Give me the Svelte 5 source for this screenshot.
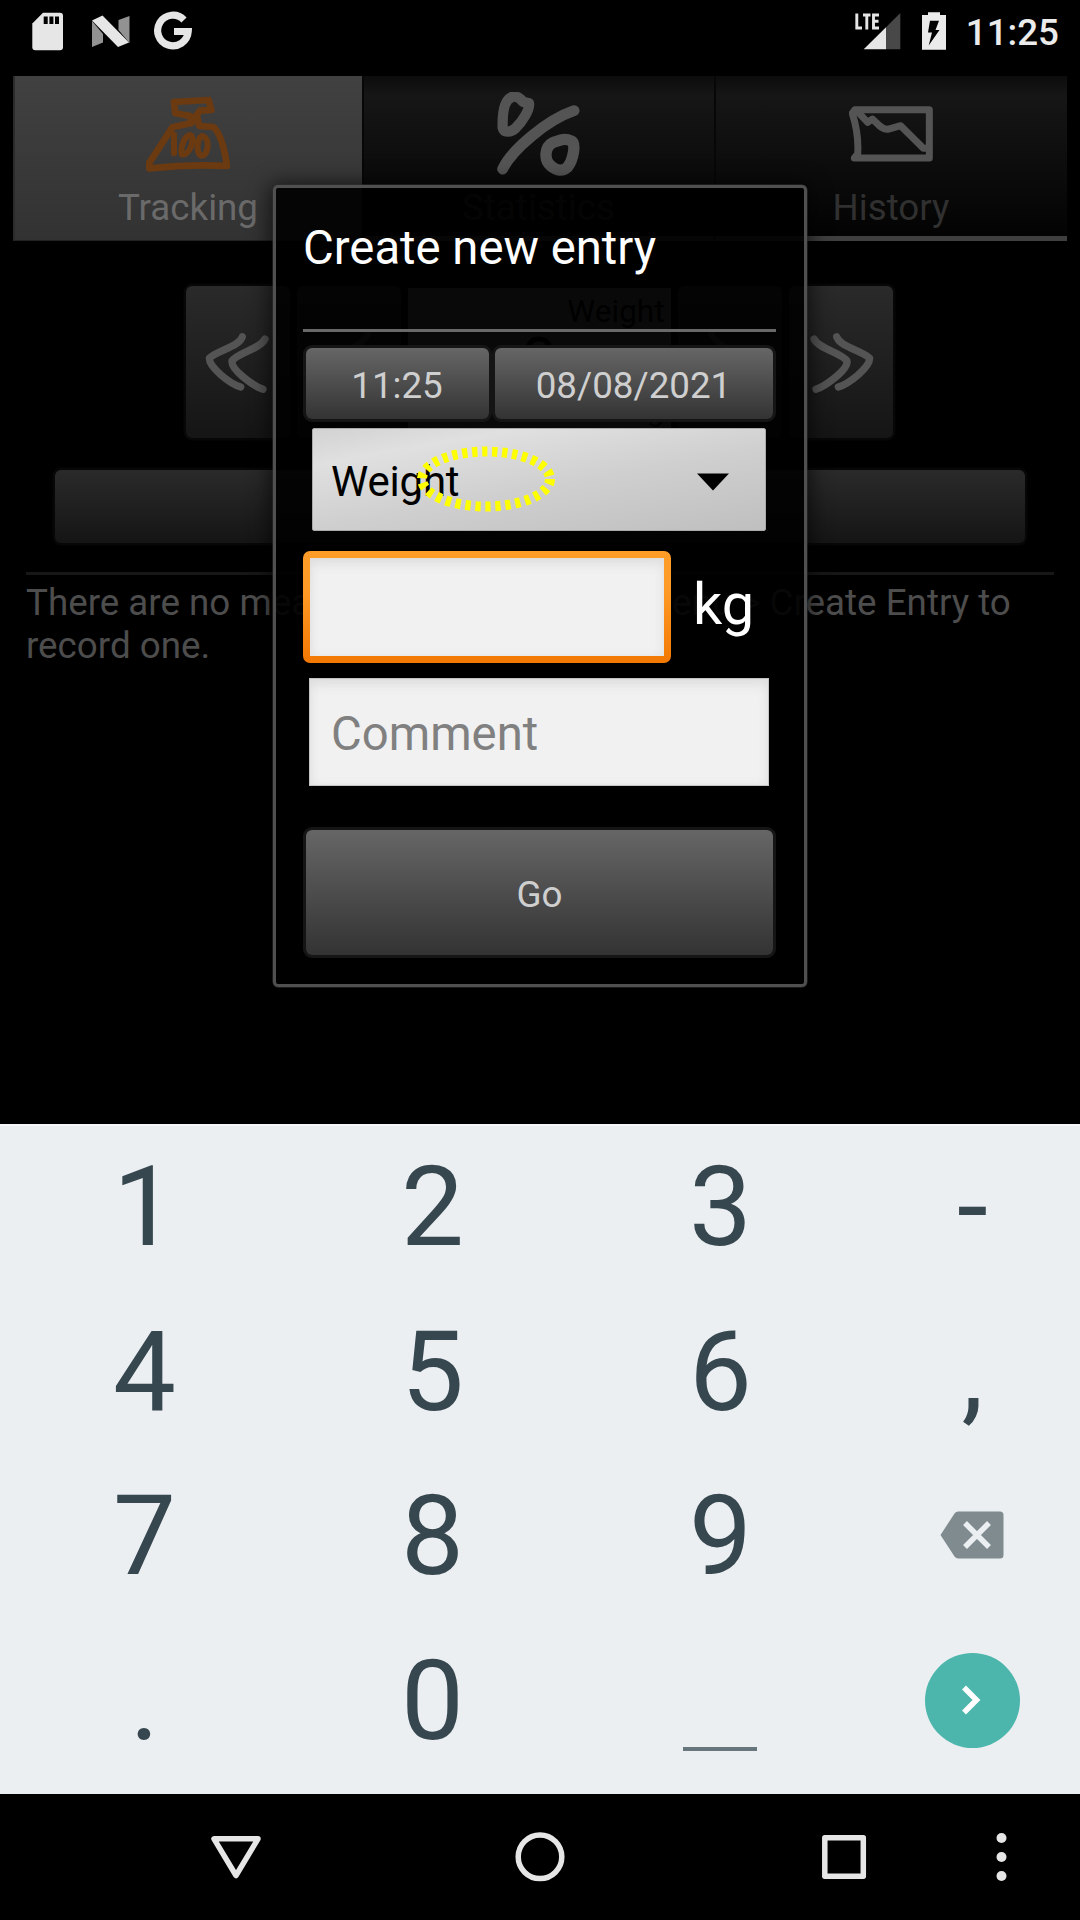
<script>
  const keys = ['1', '2', '3', '-', '4', '5', '6', ',', '7', '8', '9', 'del', '.', '0', 'space', 'next'];
</script>

<div class="screen">
  <header class="status">
    <svg class="ic-left" width="170" height="40" viewBox="30 11 170 40">
      <path fill="#e6e6e6" d="M43 12.7H60a3 3 0 0 1 3 3V47.300a3 3 0 0 1-3 3H35.300a3 3 0 0 1-3-3V23.500Z" />
      <path fill="#000" d="M43.700 16.500h4v7.500h-4zM49.400 16.500h4v7.500h-4zM55 16.500h4v7.500h-4z" />
      <path fill="#929292" d="M92 21l11 13v8.500L92 47zM118.500 20l11-4v27l-11-13z" />
      <path fill="#e6e6e6" d="M92 20.500l10.500-5L129 42.500l-11 4.500z" />
      <path fill="none" stroke="#e6e6e6" stroke-width="7.200" d="M184 19.900A15.300 15.300 0 1 0 188.200 31.500H174" />
    </svg>
    <div class="status-right">
      <svg width="96" height="40" viewBox="852 11 96 40">
        <path fill="none" stroke="#e6e6e6" stroke-width="2.900" d="M856.800 13.500V28H862M863 15h7.500M866.800 15v14.400M879 15h-5.500v13h5.500M873.500 21.300h5" />
        <path fill="#484848" d="M886 27.300L900.300 13V49.200H886z" />
        <path fill="#e6e6e6" d="M863.700 49.200L886 27.300V49.200z" />
        <path fill="#ebebeb" d="M928 12.300h12v2.800h6v34.700h-24V15.100h6z" />
        <path fill="#000" d="M930 20.700h9l-3.500 9.300h4L928.700 45.500l3.300-13h-4z" />
      </svg>
      <span class="clock">11:25</span>
    </div>
  </header>

  <main>
    <nav class="tabs">
      <div class="tab active">
        <svg width="84" height="84" viewBox="438 276 252 252" fill="none" stroke="#6c3a10" stroke-width="20" stroke-linecap="round" stroke-linejoin="round">
          <path d="M522 306L626 300L634 330L600 332L590 345L598 378L640 381C664 402 674 450 681 498C610 494 530 496 448 505L447 490L517 382L575 369L571 348L526 340Z" />
          <path stroke-width="18" d="M522 404V460M570 405C552 410 541 440 545 463C570 470 588 408 570 405ZM606 408C590 415 588 456 602 467C624 473 634 414 606 408Z" />
        </svg>
        <span>Tracking</span>
      </div>
      <div class="tab">
        <svg width="84" height="84" viewBox="411 96 252 252" fill="none" stroke="#545454" stroke-linecap="round" stroke-linejoin="round">
          <path stroke-width="31" d="M456 111C430 120 427 165 428 203C432 221 454 216 466 205C488 185 510 148 507 130L488 125Q475 106 456 111Z" />
          <path stroke-width="33" d="M428 327C455 270 560 180 642 152" />
          <path stroke-width="34" d="M606 239L580 247C553 260 551 300 573 318C590 333 609 334 622 322C640 300 649 250 634 243Q620 236 606 239Z" />
        </svg>
        <span>Statistics</span>
      </div>
      <div class="tab">
        <svg width="84" height="84" viewBox="387 276 252 252" fill="none" stroke="#545454" stroke-width="21" stroke-linecap="round" stroke-linejoin="round">
          <path d="M397 340L405 329H628V474H403L413 462C416 420 408 375 397 340" />
          <path d="M412 334L443 367L457 357C475 372 484 389 503 388L542 377L610 445H626" />
        </svg>
        <span>History</span>
      </div>
    </nav>

    <section class="picker">
      <div class="dark-btn step">
        <svg width="80" height="80" viewBox="594 216 240 240" fill="none" stroke="#545454" stroke-width="22" stroke-linecap="round" stroke-linejoin="round">
          <path d="M727 260C718 291 650 301 628 325C628 353 690 401 722 411M795 267C780 297 710 310 696 333C692 359 760 408 789 418" />
        </svg>
      </div>
      <div class="dark-btn step">
        <svg width="50" height="80" viewBox="0 0 50 80" fill="none" stroke="#454545" stroke-width="6" stroke-linecap="round"><path d="M44 12Q38 23 10 36Q20 55 44 66" /></svg>
      </div>
      <div class="value">
        <span>Weight</span>
        <b>0</b>
        <span>kg</span>
      </div>
      <div class="dark-btn step flip">
        <svg width="50" height="80" viewBox="0 0 50 80" fill="none" stroke="#454545" stroke-width="6" stroke-linecap="round"><path d="M44 12Q38 23 10 36Q20 55 44 66" /></svg>
      </div>
      <div class="dark-btn step flip">
        <svg width="80" height="80" viewBox="594 216 240 240" fill="none" stroke="#545454" stroke-width="22" stroke-linecap="round" stroke-linejoin="round">
          <path d="M727 260C718 291 650 301 628 325C628 353 690 401 722 411M795 267C780 297 710 310 696 333C692 359 760 408 789 418" />
        </svg>
      </div>
    </section>
    <div class="dark-btn wide"></div>
    <hr />
    <p class="message"><span class="lead">There are no measurements. Use</span><span>Menu &gt; Create Entry to</span><br />record one.</p>
  </main>

  <section class="keyboard">
    {#each keys as key}
      <div class="key">
        {#if key === 'del'}
          <svg class="del" width="64" height="48" viewBox="0 0 64 48">
            <path fill="#7f8b8f" d="M18 0.500H60a3.500 3.500 0 0 1 3.500 3.500V44a3.500 3.500 0 0 1-3.500 3.500H18q-2 0-3.300-1.700L0.500 24 14.700 2.200Q16 .5 18 .5Z" />
            <path stroke="#ebeff2" stroke-width="5.500" d="M25 12L49 36M49 12L25 36" />
          </svg>
        {:else if key === 'space'}
          <i class="space"></i>
        {:else if key === 'next'}
          <div class="next">
            <svg width="24" height="36" viewBox="0 0 24 36" fill="none" stroke="#fff" stroke-width="5.500"><path d="M4 5.500L16.500 18 4 30.500" /></svg>
          </div>
        {:else}
          <span>{key}</span>
        {/if}
      </div>
    {/each}
  </section>

  <footer>
    <svg width="1080" height="126" viewBox="0 1794 1080 126" fill="none" stroke="#e6e6e6" stroke-width="5.500" stroke-linejoin="round">
      <path d="M214 1838.800H258L236 1875.500Z" />
      <circle cx="540" cy="1856.800" r="21.800" />
      <rect x="824.800" y="1837.800" width="38.500" height="38.500" />
      <g fill="#e6e6e6" stroke="none"><circle cx="1001.500" cy="1838" r="5" /><circle cx="1001.500" cy="1857" r="5" /><circle cx="1001.500" cy="1876" r="5" /></g>
    </svg>
  </footer>

  <div class="dialog">
    <h1>Create new entry</h1>
    <div class="when">
      <button class="btn time">11:25</button>
      <button class="btn date">08/08/2021</button>
    </div>
    <div class="spinner">
      <span>Weight</span>
      <svg width="32" height="18" viewBox="0 0 32 18"><path d="M0 .5H32L16 17.500Z" /></svg>
      <svg class="gesture" width="140" height="68" viewBox="0 0 140 68">
        <ellipse cx="70" cy="34" rx="64" ry="27.500" fill="none" stroke="#ff0" stroke-width="10" stroke-dasharray="5.300 4.700" />
      </svg>
    </div>
    <div class="amount">
      <div class="focus"><div class="field"></div></div>
      <span>kg</span>
    </div>
    <div class="field comment">Comment</div>
    <button class="btn go">Go</button>
  </div>
</div>

<style>
  :global(body) { margin: 0; background: #000; }
  .screen {
    position: relative;
    width: 1080px;
    height: 1920px;
    overflow: hidden;
    display: grid;
    grid-template-rows: 76px 1048px 670px 126px;
    background: #000;
    font-family: Roboto, "Liberation Sans", sans-serif;
    font-size: 36.75px;
  }
  svg { display: block; flex: none; }
  .status {
    display: flex;
    justify-content: space-between;
    padding: 11px 21px 0 30px;
    color: #ebebeb;
  }
  .status-right { display: flex; gap: 18px; }
  .clock { font-weight: 500; line-height: 44px; }
  .tabs {
    display: grid;
    grid-template-columns: 349px 352px 353px;
    height: 165px;
    margin: 0 13px;
  }
  .tab {
    box-sizing: border-box;
    display: flex;
    flex-direction: column;
    align-items: center;
    padding: 16px 1px 0 0;
    border-bottom: 5px solid #3f3f3f;
    border-left: 2px solid #070707;
    background: linear-gradient(#0c0c0c, #161616 12%, #030303);
    color: #303030;
  }
  .tab.active {
    background: linear-gradient(#414141, #323232);
    border-left-color: #2b2b2b;
    border-bottom: 1px solid #222;
    color: #6a6a6a;
  }
  .tab span { margin-top: 10px; line-height: 43px; }
  .picker {
    display: grid;
    grid-template-columns: 104px 104px 263px 104px 104px;
    justify-content: center;
    gap: 7px;
    height: 152px;
    margin: 45px 2px 0 0;
  }
  .dark-btn {
    background: linear-gradient(#2a2a2a, #151515);
    border-radius: 6px;
    box-shadow: 0 0 0 2.500px #070707;
  }
  .step { display: flex; align-items: center; justify-content: center; }
  .flip { transform: scaleX(-1); }
  .value {
    background: #626262;
    margin-top: 2px;
    padding: 5px 6px 0;
    display: flex;
    flex-direction: column;
    text-align: right;
    font-size: 31.5px;
    line-height: 37px;
  }
  .value b { font-weight: 400; font-size: 63px; line-height: 62px; text-align: center; }
  .wide { height: 73px; margin: 32px 55px 0; }
  hr { border: 0; height: 3px; background: #171717; margin: 29px 26px 0; }
  .message { margin: 6px 26px 0; color: #4d4d4d; line-height: 43px; white-space: nowrap; }
  .lead { display: inline-block; width: 614px; }
  .keyboard {
    box-sizing: border-box;
    display: grid;
    grid-template-columns: 288px 288px 288px 216px;
    grid-template-rows: repeat(4, 164.7px);
    background: #ebeff2;
    border-top: 2px solid #f5f7f8;
    color: #37474f;
    font-size: 112px;
    line-height: 162px;
  }
  .key { display: flex; justify-content: center; align-items: center; }
  .key span { margin: 0 0 3px 1px; }
  .space { width: 74px; height: 4px; margin-top: 94px; background: #66767c; }
  .del { margin: 0 1px 6px 0; }
  .next {
    width: 95px;
    height: 95px;
    margin-bottom: 4px;
    border-radius: 50%;
    background: #4db6ac;
    display: flex;
    align-items: center;
    justify-content: center;
  }
  .dialog {
    position: absolute;
    left: 273px;
    top: 185px;
    box-sizing: border-box;
    width: 534px;
    height: 802px;
    padding: 29px 28px 0 27px;
    border: 3px solid #505050;
    border-radius: 5px;
    background: rgba(0, 0, 0, 0.9);
    box-shadow: 0 0 0 0.500px #333, 0 2px 20px 4px rgba(0, 0, 0, 0.6);
  }
  h1 {
    margin: 0;
    height: 112px;
    border-bottom: 3px solid #696969;
    color: #fff;
    font-size: 47.25px;
    font-weight: 400;
    line-height: 62px;
  }
  .btn {
    display: block;
    border: 0;
    padding: 0;
    border-radius: 6px;
    background: linear-gradient(#666, #333);
    box-shadow: 0 0 0 3px #151515;
    color: #cfcfcf;
    font: inherit;
    text-align: center;
  }
  .when { display: flex; gap: 6px; margin: 16px 3px 0; height: 71px; }
  .when .btn { padding: 3px 1px 0 0; }
  .time { width: 183px; }
  .date { width: 278px; }
  .spinner {
    position: relative;
    box-sizing: border-box;
    display: flex;
    align-items: center;
    justify-content: space-between;
    height: 103px;
    margin: 9px 10px 0 9px;
    padding: 4px 36px 0 18px;
    border: 1px solid #aaa;
    border-radius: 2px;
    background: linear-gradient(170deg, #d2d2d2, #e0e0e0 20%, #cfcfcf 55%, #bfbfbf);
    font-size: 42px;
    letter-spacing: -0.2px;
  }
  .spinner svg:not(.gesture) { margin-top: 1px; }
  .gesture { position: absolute; left: 103px; top: 16px; }
  .amount { display: flex; margin-top: 20px; color: #fff; font-size: 57.75px; }
  .amount span { margin-left: 22px; line-height: 107px; }
  .focus {
    box-sizing: border-box;
    width: 368px;
    height: 112px;
    padding: 7px;
    border-radius: 7px;
    background: linear-gradient(#ff9d28, #ff9a26 35%, #f27802);
  }
  .field {
    box-sizing: border-box;
    height: 98px;
    background: #f1f1f1;
    box-shadow: inset 0 7px 14px -3px #dcdcdc, inset 0 0 8px #e4e4e4;
  }
  .comment {
    height: 108px;
    margin: 15px 7px 0 6px;
    padding-left: 21px;
    border: 1px solid #c4c4c4;
    color: #808080;
    font-size: 47.25px;
    line-height: 111px;
  }
  .go { width: 467px; height: 125px; margin: 44px 3px 0; padding-top: 4px; }
</style>
